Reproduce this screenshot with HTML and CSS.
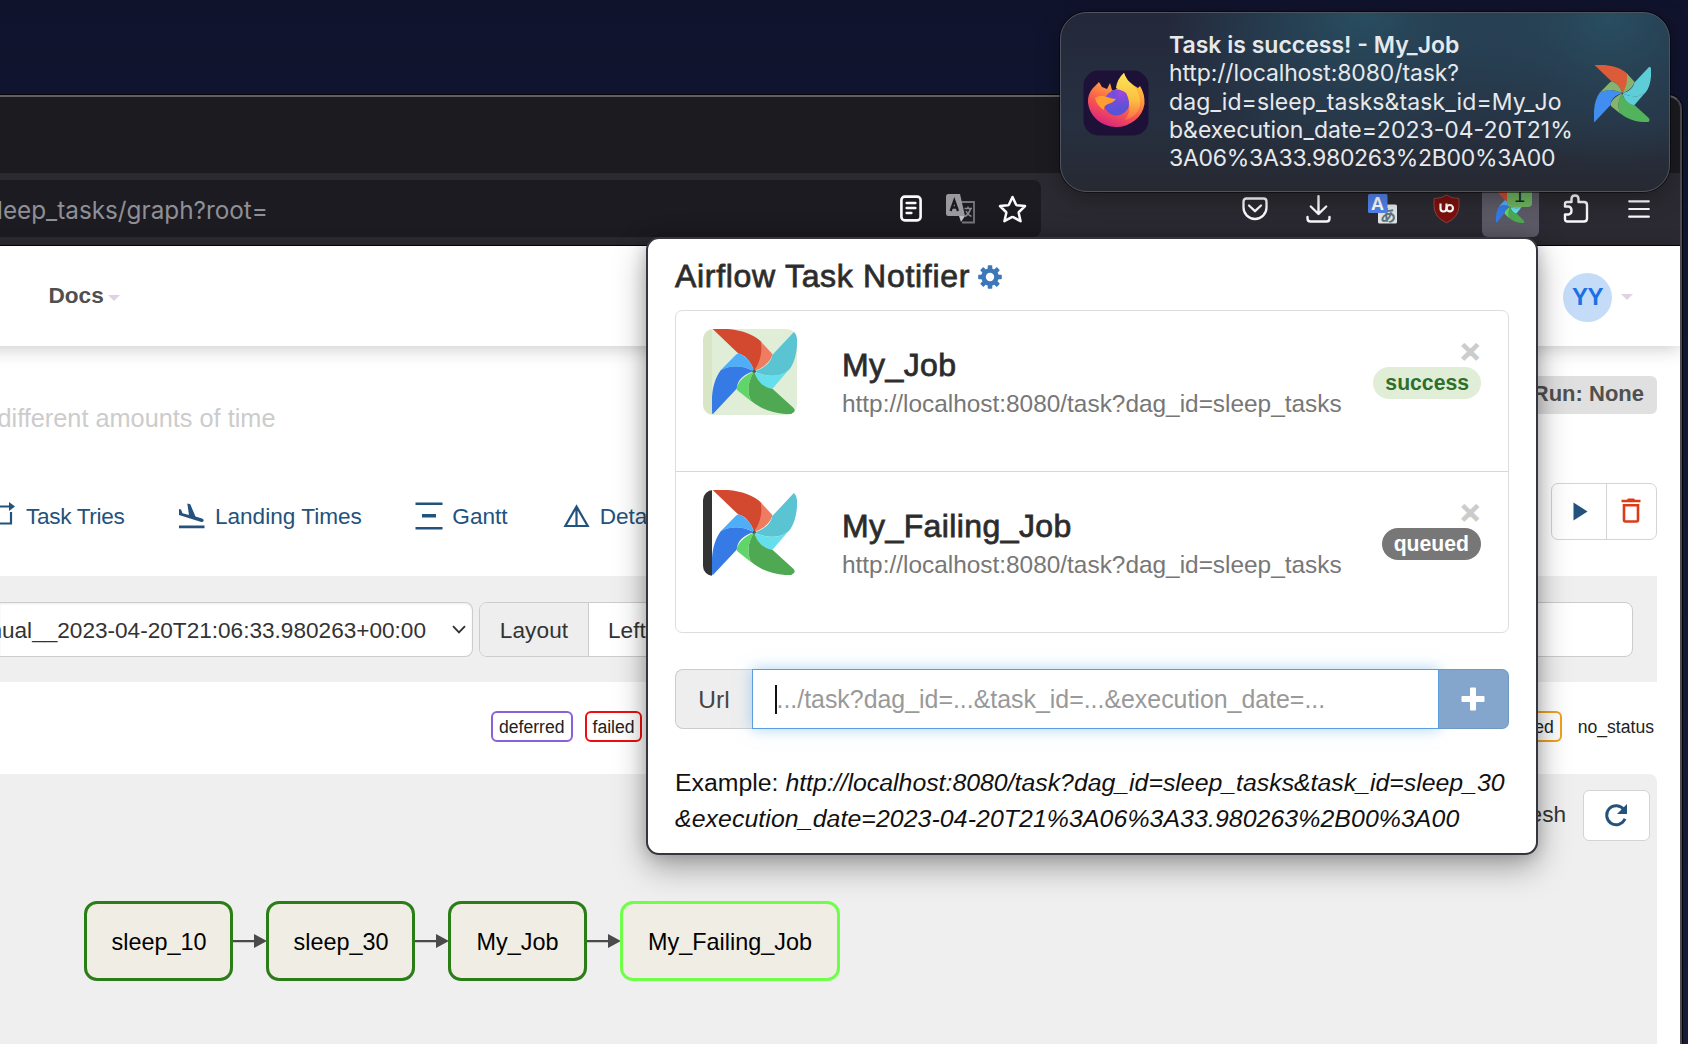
FILE: index.html
```html
<!DOCTYPE html>
<html lang="en">
<head>
<meta charset="utf-8">
<title>sleep_tasks - Graph - Airflow</title>
<link rel="stylesheet" href="styles.css">
</head>
<body>
<svg class="defs" width="0" height="0">
  <symbol id="pinwheel" viewBox="70 30 252 252" preserveAspectRatio="none">
    <path class="pw-red" d="M70 28C130 28 185 36 216 68C226 100 210 135 195 155C186 128 168 106 148 103Z"/>
    <path class="pw-red-l" d="M214 66L249 104C243 130 220 146 195 155C212 128 221 98 214 66Z"/>
    <path class="pw-cyan" d="M248 108L312 40C321 36 326 48 323 70C320 110 312 135 299 150C275 174 232 174 195 155C225 147 245 130 248 108Z"/>
    <path class="pw-cyan-l" d="M299 149L252 204C246 211 238 210 232 206C212 196 202 176 195 155C232 174 275 174 299 149Z"/>
    <path class="pw-green" d="M195 155C202 178 215 202 250 208L312 264C318 272 316 282 305 283C262 282 220 272 186 243C171 214 178 182 195 155Z"/>
    <path class="pw-green-l" d="M187 245L146 212C142 208 142 202 146 196C156 176 176 164 195 155C178 184 171 214 187 245Z"/>
    <path class="pw-blue" d="M195 155C166 162 145 180 143 207L71 284C66 230 72 184 96 152C128 133 166 140 195 155Z"/>
    <path class="pw-blue-l" d="M94 154L141 106C146 102 152 102 158 106C178 116 188 134 195 155C166 140 128 133 94 154Z"/>
    <circle class="pw-dot" cx="195" cy="155" r="5"/>
  </symbol>
</svg>

<div class="desktop">
  <div class="window">
    <div class="tabstrip"></div>
    <div class="toolbar">
      <div class="urlbar">
        <span class="urlbar-text">leep_tasks/graph?root=</span>
        <div class="urlbar-icons">
          <svg width="22" height="27" viewBox="0 0 22 27" fill="none" stroke="#fbfbfe" stroke-width="2.6" stroke-linecap="round"><rect x="1.4" y="1.6" width="19.2" height="23.8" rx="3.4"/><path d="M6.6 8h8.8M6.6 13h8.8M6.6 18h4.8" stroke-width="2.4"/></svg>
          <svg class="ico-translate" width="30" height="30" viewBox="0 0 30 30"><path d="M15 8h13v20.500H16" fill="none" stroke="#77767c" stroke-width="1.800"/><path d="M2.500 0h11.500l5 22H2.500Q0 22 0 19.500V2.500Q0 0 2.500 0z" fill="#9a999e"/><path d="M13 22h6l-4 6z" fill="#c0c0c4"/><path d="M4.600 17L8.300 6.500L12 17M5.800 13.500h5" fill="none" stroke="#1c1b22" stroke-width="2.300"/><path d="M18.500 14.500h7.500M22 12.500v2M24.500 15q-1.500 5-5.500 7.500M20 17q2 4 5.500 5.500" fill="none" stroke="#8a898f" stroke-width="1.500"/></svg>
          <svg width="29" height="28" viewBox="0 0 29 28" fill="none" stroke="#fbfbfe" stroke-width="2.500" stroke-linejoin="round"><path d="M14.500 2L18 9.500Q18.300 10.100 19 10.200L27 11.100L21 17Q20.600 17.400 20.700 18L22.600 26.200L15.200 22.200Q14.500 21.900 13.800 22.200L6.400 26.200L8.300 18Q8.400 17.400 8 17L2 11.100L10 10.200Q10.700 10.100 11 9.500Z"/></svg>
        </div>
      </div>
      <div class="toolbar-icons">
        <svg class="tb-pocket" width="26" height="24" viewBox="0 0 26 24" fill="none" stroke="#fbfbfe" stroke-width="2.300" stroke-linecap="round" stroke-linejoin="round"><path d="M4.500 1.500h17Q24.500 1.500 24.500 4.500V10.500A11.500 11.500 0 0 1 1.500 10.500V4.500Q1.500 1.500 4.500 1.500z"/><path d="M7 8.500L13 14.200L19 8.500"/></svg>
        <svg class="tb-download" width="25" height="28" viewBox="0 0 25 28" fill="none" stroke="#fbfbfe" stroke-width="2.400" stroke-linecap="round" stroke-linejoin="round"><path d="M12.500 1.200V18.500M4.800 11.500L12.500 19L20.200 11.500M1.500 22V23.500Q1.500 26.500 4.500 26.500H20.500Q23.500 26.500 23.500 23.500V22"/></svg>
        <svg class="tb-trans" width="30" height="30" viewBox="0 0 30 30"><rect x="10" y="10.500" width="19" height="19" rx="1.500" fill="#e4e6e8"/><text x="12" y="26.500" font-family="Noto Sans CJK JP, sans-serif" font-size="16" font-weight="700" fill="#5d7580">あ</text><rect x="0" y="0" width="19.500" height="19" rx="1.500" fill="#5282ea"/><text x="3" y="15.500" font-family="Liberation Sans, sans-serif" font-size="18" font-weight="700" fill="#fff">A</text></svg>
        <svg class="tb-ublock" width="27" height="30" viewBox="0 0 27 30"><path d="M13.500 1Q18 4.500 26 4.500V12Q26 23 13.500 28.800Q1 23 1 12V4.500Q9 4.500 13.500 1z" fill="#7d110f" stroke="#96534f" stroke-width=".8"/><path d="M7.500 9.500v5q0 3 3 3t3-3v-5" fill="none" stroke="#fff" stroke-width="2.200"/><circle cx="16.800" cy="14.200" r="3.200" fill="none" stroke="#fff" stroke-width="2.200"/></svg>
        <div class="ext-active"><svg class="ext-pin" width="29" height="32"><use href="#pinwheel"/></svg><span class="ext-count">1</span></div>
        <svg class="tb-puzzle" width="26" height="29" viewBox="0 0 26 29" fill="none" stroke="#fbfbfe" stroke-width="2.400" stroke-linejoin="round"><path d="M2 12.500V10Q2 8 4 8H8.500V5Q8.500 1.500 12 1.500T15.500 5V8H21Q24 8 24 11V24.500Q24 27.500 21 27.500H4.500Q2 27.500 2 25V20.500H5.500Q8.500 20 8.500 16.500T5.500 12.500Z"/></svg>
        <svg class="tb-menu" width="22" height="18" viewBox="0 0 22 18" stroke="#fbfbfe" stroke-width="2.200" stroke-linecap="round"><path d="M1.200 1.300h19.600M1.200 9h19.600M1.200 16.700h19.600"/></svg>
      </div>
    </div>

    <div class="page">
      <nav class="navbar">
        <div class="nav-item">Docs<i class="caret"></i></div>
        <div class="nav-user"><span class="avatar">YY</span><i class="caret"></i></div>
      </nav>
      <div class="dag-head">
        <p class="dag-desc">different amounts of time</p>
        <span class="next-run">Run: None</span>
      </div>
      <div class="tabs-row">
        <div class="tabs">
          <a class="tab t-tries"><svg width="17" height="26" viewBox="0 0 17 26" fill="none" stroke="#23527c" stroke-width="2.200"><path d="M0 5.500h11M12 11V22.500H0"/><path d="M10 1v9l6-4.500z" fill="#23527c" stroke="none"/></svg><span class="tries-text">Task Tries</span></a>
          <a class="tab t-landing"><svg width="27" height="26" viewBox="0 0 27 26"><path d="M1 22.500h25.500v2.800H1zM1 6l2 .600 1.500 3.600 6.500 1.800L9.300.500l3 .800 5.200 12.300 6.500 1.900q2 .800 1.600 2.500-.6 1.300-2.300 1L1 12z" fill="#23527c"/></svg><span>Landing Times</span></a>
          <a class="tab t-gantt"><svg width="28" height="28" viewBox="0 0 28 28" fill="#23527c"><path d="M.500.500h27v2.400H.500zM7 12h14v3.600H7zM.500 25h27v2.500H.500z"/></svg><span>Gantt</span></a>
          <a class="tab t-details"><svg width="27" height="24" viewBox="0 0 27 24" fill="none" stroke="#23527c" stroke-width="2.200"><path d="M13.500 2.500L2.300 22h22.400zM13.500 3v19"/></svg><span>Deta</span></a>
        </div>
        <div class="actions">
          <span class="action play"><svg width="15" height="19" viewBox="0 0 15 19"><path d="M.500.500L14.500 9.500L.500 18.500z" fill="#23527c"/></svg></span>
          <span class="action"><svg width="20" height="25" viewBox="0 0 20 25"><path d="M.500 1.800H6L7 .500h6l1 1.300h5.500v2.400H.500z" fill="#dd3a17"/><path d="M3 7.300H17V22Q17 23.500 15.500 23.500H4.500Q3 23.500 3 22z" fill="none" stroke="#dd3a17" stroke-width="2.600"/></svg></span>
        </div>
      </div>
      <div class="filters">
        <div class="run-select"><span>nual__2023-04-20T21:06:33.980263+00:00</span><svg width="14" height="9" viewBox="0 0 14 9" fill="none" stroke="#333" stroke-width="1.900"><path d="M1 1.200L7 7.400L13 1.200"/></svg></div>
        <div class="layout-group"><span class="layout-label">Layout</span><span class="layout-value">Left</span></div>
      </div>
      <div class="legend">
        <span class="state deferred">deferred</span>
        <span class="state failed">failed</span>
        <span class="state retry">ed</span>
        <span class="state none">no_status</span>
      </div>
      <div class="graph">
        <div class="graph-tools"><span class="refresh-label">esh</span><span class="refresh"><svg width="24" height="25" viewBox="0 0 24 25"><path d="M20 6.800A9.500 9.500 0 1 0 21 15.800" fill="none" stroke="#23527c" stroke-width="2.900"/><path d="M23 1v10H13z" fill="#23527c"/></svg></span></div>
        <div class="nodes">
          <span class="node n-sleep">sleep_10</span>
          <svg class="edge" width="33" height="16" viewBox="0 0 33 16"><path d="M0 7h23v2.200H0zM21 1l13 7-13 7z" fill="#4a4a4a"/></svg>
          <span class="node n-sleep">sleep_30</span>
          <svg class="edge" width="33" height="16" viewBox="0 0 33 16"><path d="M0 7h23v2.200H0zM21 1l13 7-13 7z" fill="#4a4a4a"/></svg>
          <span class="node n-job">My_Job</span>
          <svg class="edge" width="33" height="16" viewBox="0 0 33 16"><path d="M0 7h23v2.200H0zM21 1l13 7-13 7z" fill="#4a4a4a"/></svg>
          <span class="node n-failing">My_Failing_Job</span>
        </div>
      </div>
    </div>
  </div>

  <section class="popup">
    <h1 class="popup-title">Airflow Task Notifier<svg width="24" height="24" viewBox="-12 -12 24 24" fill="#3c78b9"><g><rect x="-2.300" y="-11.800" width="4.600" height="23.600" rx=".8"/><rect x="-2.300" y="-11.800" width="4.600" height="23.600" rx=".8" transform="rotate(45)"/><rect x="-2.300" y="-11.800" width="4.600" height="23.600" rx=".8" transform="rotate(90)"/><rect x="-2.300" y="-11.800" width="4.600" height="23.600" rx=".8" transform="rotate(135)"/></g><circle r="8.800"/><circle r="4.200" fill="#fff"/></svg></h1>
    <ul class="tasks">
      <li class="task">
        <span class="thumb thumb-success"><svg width="85" height="85"><use href="#pinwheel"/></svg></span>
        <div class="task-text"><h2>My_Job</h2><p>http://localhost:8080/task?dag_id=sleep_tasks</p></div>
        <div class="task-side"><span class="close">×</span><span class="badge success">success</span></div>
      </li>
      <li class="task">
        <span class="thumb thumb-queued"><svg width="85" height="85"><use href="#pinwheel"/></svg></span>
        <div class="task-text"><h2>My_Failing_Job</h2><p>http://localhost:8080/task?dag_id=sleep_tasks</p></div>
        <div class="task-side"><span class="close">×</span><span class="badge queued">queued</span></div>
      </li>
    </ul>
    <div class="url-group">
      <span class="addon">Url</span>
      <div class="url-input"><i class="cursor"></i><span>.../task?dag_id=...&amp;task_id=...&amp;execution_date=...</span></div>
      <span class="add"><svg width="24" height="24" viewBox="0 0 24 24"><path d="M9 1.500Q9 .500 10 .500h4q1 0 1 1V9h7.500q1 0 1 1v4q0 1-1 1H15v7.500q0 1-1 1h-4q-1 0-1-1V15H1.500q-1 0-1-1v-4q0-1 1-1H9z" fill="#fff"/></svg></span>
    </div>
    <p class="example">Example: <em>http://localhost:8080/task?dag_id=sleep_tasks&amp;task_id=sleep_30<br><span class="example-tail">&amp;execution_date=2023-04-20T21%3A06%3A33.980263%2B00%3A00</span></em></p>
  </section>

  <aside class="toast">
    <svg class="toast-app" width="66" height="66" viewBox="0 0 66 66">
      <defs>
        <linearGradient id="ffBody" x1=".8" y1="0" x2=".35" y2="1"><stop offset="0" stop-color="#ffe14a"/><stop offset=".35" stop-color="#ffa03a"/><stop offset=".65" stop-color="#fa5a4e"/><stop offset="1" stop-color="#d8257e"/></linearGradient>
        <linearGradient id="ffFlame" x1=".45" y1="0" x2=".4" y2="1"><stop offset="0" stop-color="#fbe75a"/><stop offset=".55" stop-color="#fcc040"/><stop offset="1" stop-color="#fb6a48"/></linearGradient>
        <radialGradient id="ffGlobe" cx=".6" cy=".1" r="1"><stop offset="0" stop-color="#a545e0"/><stop offset=".5" stop-color="#6f4fd8"/><stop offset="1" stop-color="#4a55d8"/></radialGradient>
      </defs>
      <rect x=".5" y=".5" width="65" height="65" rx="15" fill="#1d1138"/>
      <path d="M10 18L16 12L19 17L24 19L27 13L29 20Q31 21 35 18Q34 9 41 3Q43 10 50 15L55 18L57 16Q62 24 61.500 34A28.500 27 0 0 1 5 33Q4.500 24 10 18z" fill="url(#ffBody)"/>
      <circle cx="33.500" cy="33" r="12.500" fill="url(#ffGlobe)"/>
      <path d="M33 18Q34 9 41 3Q43 10 50 15Q58 23 57 36Q54 47 42 50Q48 42 46 33Q47 27 40 24Q38 20 33 18z" fill="url(#ffFlame)"/>
      <path d="M28 21Q36 17 43 23Q45 26 45 29L41 26Q47 32 45 39Q40 44 34 40L30 28z" fill="url(#ffGlobe)"/>
      <path d="M12 28Q17 24 24 27Q29 29 33 29Q30 33 25 34Q20 36 21 40Q14 36 12 28z" fill="#ff9d33"/>
    </svg>
    <div class="toast-text">
      <strong class="l1">Task is success! - My_Job</strong>
      <span class="l2">http://localhost:8080/task?</span>
      <span class="l3">dag_id=sleep_tasks&amp;task_id=My_Jo</span>
      <span class="l4">b&amp;execution_date=2023-04-20T21%</span>
      <span class="l5">3A06%3A33.980263%2B00%3A00</span>
    </div>
    <svg class="toast-pin" width="57" height="57"><use href="#pinwheel"/></svg>
  </aside>
</div>
</body>
</html>
```

FILE: styles.css
```css
* { box-sizing: border-box; margin: 0; padding: 0; }
body { font-family: "Liberation Sans", Arial, sans-serif; font-size: 22.6px; color: #333; overflow: hidden; }
svg { display: block; flex: none; }
.defs { position: absolute; }

.pw-red { fill: var(--red, #d2492f); }
.pw-red-l { fill: var(--red-l, #ee7c60); }
.pw-cyan { fill: var(--cyan, #5bc4d2); }
.pw-cyan-l { fill: var(--cyan-l, #66dfec); }
.pw-green { fill: var(--green, #4ea952); }
.pw-green-l { fill: var(--green-l, #62d56a); }
.pw-blue { fill: var(--blue, #367ae6); }
.pw-blue-l { fill: var(--blue-l, #50aef8); }
.pw-dot { fill: #4a5560; }

.desktop { position: relative; width: 1688px; height: 1044px; padding-top: 1px; overflow: hidden; background: linear-gradient(#10132c, #10152f 10%, #171a38); }

/* Browser window */
.window { width: 1682px; height: 950px; margin-top: 94px; display: flex; flex-direction: column; border-top: 2px solid #615f66; border-right: 2px solid #4b4a52; border-radius: 0 14px 0 0; box-shadow: 0 0 0 1px #050509; overflow: hidden; background: #1c1b20; }
.tabstrip { height: 76px; flex: none; }
.toolbar { height: 73px; flex: none; display: flex; align-items: flex-start; background: #2b2a32; border-bottom: 1px solid #050508; padding-top: 7px; }
.urlbar { width: 1041px; height: 57px; display: flex; align-items: center; justify-content: space-between; background: #1c1b21; border-radius: 0 8px 8px 0; padding-right: 14px; }
.urlbar-text { font-family: Inter, sans-serif; font-size: 24.3px; color: #8f8f96; margin: 2px 0 0 -3px; white-space: nowrap; }
.urlbar-icons { display: flex; align-items: center; gap: 22px; }
.ico-translate { margin-left: 2px; }
.toolbar-icons { display: flex; align-items: center; height: 57px; margin-left: 201px; }
.tb-download { margin-left: 38px; }
.tb-trans { margin-left: 37px; }
.tb-ublock { margin-left: 35px; }
.ext-active { position: relative; margin-left: 22px; width: 57px; height: 57px; border-radius: 6px; background: #5b5a66; }
.ext-pin { margin: 11px 0 0 14px; }
.ext-count { position: absolute; left: 25px; top: 2px; width: 25px; height: 25px; border-radius: 4px; background: #6fb362; color: #16301a; font-size: 20px; line-height: 26px; text-align: center; }
.tb-puzzle { margin-left: 24px; }
.tb-menu { margin-left: 39px; }

/* Page */
.page { flex: 1; background: #fff; display: flex; flex-direction: column; }
.navbar { height: 100px; flex: none; display: flex; align-items: center; justify-content: space-between; margin-left: -40px; padding: 0 47px 0 88.5px; font-weight: 700; color: #51504f; box-shadow: 0 2px 18px rgba(0,0,0,.22); }
.nav-item, .nav-user { display: flex; align-items: center; }
.caret { border: 6px solid transparent; border-top-color: #e0d2e4; border-bottom: 0; margin: 3px 0 0 4px; }
.avatar { width: 49px; height: 49px; margin-top: 2px; border-radius: 50%; background: #c5dcf8; color: #1b70e6; display: flex; align-items: center; justify-content: center; font-size: 24px; letter-spacing: -.5px; }
.nav-user .caret { margin: 2px 0 0 9px; }
.dag-head { display: flex; justify-content: space-between; align-items: flex-start; height: 137px; flex: none; padding: 30px 23px 0 0; }
.dag-desc { font-size: 25.3px; color: #ccc; line-height: 28px; margin: 28px 0 0 -2.5px; }
.next-run { height: 38px; width: 170px; background: #e0e0e0; border-radius: 6px; font-size: 22px; font-weight: 700; color: #51504f; line-height: 35px; text-align: right; padding-right: 13px; }
.tabs-row { display: flex; justify-content: space-between; height: 93px; flex: none; padding-right: 23px; }
.tabs { display: flex; align-items: center; height: 66px; color: #23527c; }
.tab { display: flex; align-items: center; gap: 10px; white-space: nowrap; }
.tab span { padding-top: 1px; }
.t-tries { margin-left: -1px; }
.t-tries svg { margin-top: -4px; }
.tries-text { letter-spacing: -.33px; }
.t-landing { margin-left: 53.5px; }
.t-gantt { margin-left: 53.500px; gap: 9px; }
.t-details { margin-left: 55px; }
.actions { display: flex; height: 57px; width: 106px; border: 1px solid #d4d4d4; border-radius: 7px; }
.action { flex: 1; display: flex; align-items: center; justify-content: center; padding-bottom: 2px; }
.play { padding-left: 4px; padding-bottom: 0; }
.action + .action { border-left: 1px solid #d4d4d4; }
.filters { display: flex; gap: 6px; height: 106px; flex: none; width: 1657px; padding: 26px 24px 0 0; background: #efefef; }
.run-select { width: 473px; height: 55px; flex: none; display: flex; align-items: center; justify-content: space-between; background: #fff; border: 1px solid #ccc; border-left: 0; border-radius: 0 8px 8px 0; padding-right: 6px; box-shadow: inset 0 1px 2px rgba(0,0,0,.08); }
.run-select span { width: 426px; padding-top: 2px; display: flex; justify-content: flex-end; white-space: nowrap; }
.layout-group { display: flex; flex: 1; height: 55px; line-height: 55px; border: 1px solid #ccc; border-radius: 8px; background: #fff; overflow: hidden; }
.layout-label { width: 109px; text-align: center; letter-spacing: .1px; background: #eee; border-right: 1px solid #ccc; }
.layout-value { padding-left: 19px; }
.legend { display: flex; align-items: center; height: 92px; flex: none; padding-left: 491px; width: 1657px; font-size: 17.6px; color: #222; padding-bottom: 3px; }
.state { height: 31px; line-height: 28.4px; border: 2.4px solid; border-radius: 6px; padding: 0 6px; white-space: nowrap; }
.state.deferred { border-color: #8860d8; }
.state.failed { border-color: #ee0e0e; margin-left: 12.5px; padding: 0 5.5px; }
.state.retry { border-color: #f0a11c; margin-left: auto; }
.state.none { border-color: transparent; margin: 0 -5px 0 8px; }
.graph { flex: 1; width: 1657px; background: #efefef; border-radius: 0 8px 0 0; padding-top: 16px; }
.graph-tools { display: flex; justify-content: flex-end; gap: 17px; padding-right: 7px; line-height: 49px; }
.refresh { width: 67px; height: 51px; background: #fff; border: 1px solid #d4d4d4; border-radius: 6px; display: flex; align-items: center; justify-content: center; padding-right: 2px; }
.nodes { display: flex; align-items: center; margin: 60px 0 0 84px; font-size: 23.4px; color: #000; }
.node { height: 80px; line-height: 75px; border: 3.4px solid #2b7d18; border-radius: 13px; background: #f0ede4; text-align: center; padding-top: 1px; }
.n-sleep { width: 149px; padding-left: 1px; }
.n-job { width: 139px; }
.n-failing { width: 220px; border-color: #70ff48; }

/* Extension popup */
.popup { position: absolute; left: 646px; top: 237px; width: 892px; height: 618px; border: 2px solid #35343f; border-radius: 13px; background: #fff; padding: 20px 27px 0; box-shadow: 0 12px 32px rgba(0,0,0,.34), 0 0 16px rgba(0,0,0,.16); }
.popup-title { display: flex; align-items: center; height: 34px; font-size: 32px; font-weight: 400; letter-spacing: .7px; -webkit-text-stroke: .8px #333; color: #2a2a2a; white-space: nowrap; }
.popup-title svg { margin: 2px 0 0 8px; -webkit-text-stroke: 0; }
.tasks { list-style: none; margin-top: 17px; height: 323px; border: 1.500px solid #ddd; border-radius: 7px; }
.task { display: flex; height: 160px; padding: 18px 27px 0 27px; }
.task + .task { border-top: 1px solid #d8d8d8; }
.thumb { width: 94px; height: 86px; border-radius: 10px; overflow: hidden; padding-left: 9px; flex: none; }
.thumb-success { background: linear-gradient(90deg, #d8e6c6 9px, #e0eed8 9px); }
.thumb-queued { background: linear-gradient(90deg, #333 9px, #fff 9px); }
.task-text { margin: 17px 0 0 45px; }
.task-text h2 { font-size: 32px; line-height: 39px; font-weight: 400; letter-spacing: .4px; -webkit-text-stroke: .8px #333; color: #2a2a2a; }
.task-text p { font-size: 24.4px; line-height: 38px; color: #777; white-space: nowrap; }
.task-side { margin-left: auto; display: flex; flex-direction: column; align-items: flex-end; padding-top: 6px; }
.close { font-size: 34px; line-height: 32px; font-weight: 700; color: #ccc; margin-right: 1px; -webkit-text-stroke: .8px #ccc; }
.badge { height: 32px; line-height: 32px; border-radius: 16px; padding: 0 12px; font-size: 21.2px; font-weight: 700; }
.badge.success { background: #e0eed8; color: #2f6f2c; }
.badge.queued { background: #777; color: #fff; }
.url-group { display: flex; height: 60px; margin-top: 36px; }
.addon { width: 77px; line-height: 60px; text-align: center; background: #eee; border: 1px solid #ccc; border-right: 0; border-radius: 8px 0 0 8px; font-size: 24.5px; color: #444; }
.url-input { flex: 1; display: flex; align-items: center; border: 1.500px solid #5b9edf; background: #fff; box-shadow: 0 0 14px rgba(102,175,233,.55); padding-left: 22px; font-size: 24.9px; color: #999; white-space: nowrap; }
.url-input span { padding-top: 1px; }
.cursor { width: 1.500px; height: 29px; background: #111; }
.add { width: 70px; display: flex; align-items: center; justify-content: center; background: #84a6cc; border: 1px solid #6f98c5; border-left: 0; border-radius: 0 7px 7px 0; position: relative; padding-right: 2px; }
.example { margin-top: 36px; font-size: 24.83px; line-height: 35.6px; color: #111; white-space: nowrap; }
.example-tail { letter-spacing: .09px; }

/* Desktop notification */
.toast { position: absolute; left: 1060px; top: 12px; width: 610px; height: 180px; border: 1.500px solid #50545f; border-radius: 27px; background: radial-gradient(ellipse 200px 150px at 50% 0, rgba(42,84,104,.85), transparent), radial-gradient(ellipse 190px 150px at 90% 3%, rgba(42,84,104,.85), transparent), linear-gradient(#23283a, #263040 60%, #272932); box-shadow: 0 0 0 1px rgba(0,0,0,.5), 0 6px 24px rgba(0,0,0,.3); display: flex; padding: 18px 18px 0 22px; }
.toast-app { margin-top: 39px; }
.toast-text { display: flex; flex-direction: column; margin-left: 20px; font-family: Inter, sans-serif; font-size: 23px; line-height: 28.300px; color: #e6e9ec; }
.toast-text span, .toast-text strong { white-space: nowrap; }
.toast-text strong { font-weight: 600; }
.toast-text .l2 { letter-spacing: -.12px; }
.toast-text .l3 { letter-spacing: .1px; }
.toast-text .l5 { letter-spacing: -.29px; }
.toast-pin { margin: 34px 0 0 auto; --red: #dc5c3a; --red-l: #86b46f; --cyan: #5ecdd8; --cyan-l: #5ecdd8; --green: #52b35c; --green-l: #86b46f; --blue: #428df0; --blue-l: #86b46f; }
```
